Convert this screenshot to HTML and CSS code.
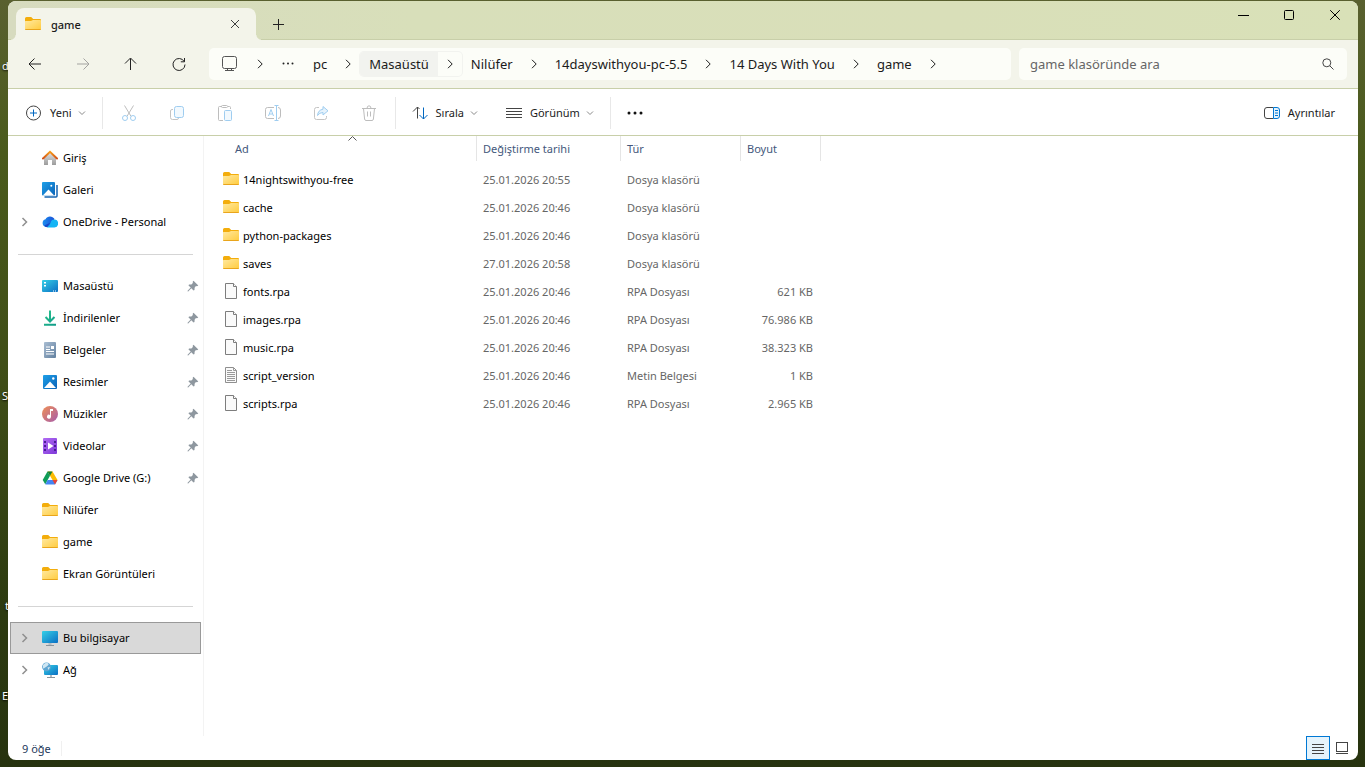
FILE: index.html
```html
<!DOCTYPE html>
<html lang="tr">
<head>
<meta charset="UTF-8">
<meta name="viewport" content="width=device-width, initial-scale=1">
<title>game - Dosya Gezgini</title>
<link rel="stylesheet" href="styles.css">
</head>
<body>

<!-- shared icons -->
<svg class="sprite" aria-hidden="true">
  <defs>
    <linearGradient id="g-folder" x1="0" y1="0" x2="1" y2="1">
      <stop offset="0" stop-color="#ffe9a0"/><stop offset="1" stop-color="#ffcb3d"/>
    </linearGradient>
    <linearGradient id="g-blue" x1="0" y1="0" x2="1" y2="1">
      <stop offset="0" stop-color="#1ea0e8"/><stop offset="1" stop-color="#0a62b8"/>
    </linearGradient>
    <linearGradient id="g-cyan" x1="0" y1="0" x2="1" y2="1">
      <stop offset="0" stop-color="#35d0e6"/><stop offset="1" stop-color="#0b6fc4"/>
    </linearGradient>
    <linearGradient id="g-cloud" x1="0" y1="0" x2="1" y2="0">
      <stop offset="0" stop-color="#1b8df0"/><stop offset="1" stop-color="#1b52d6"/>
    </linearGradient>
    <linearGradient id="g-house" x1="0" y1="0" x2="0" y2="1">
      <stop offset="0" stop-color="#dcdcdc"/><stop offset="1" stop-color="#9c9c9c"/>
    </linearGradient>
    <linearGradient id="g-roof" x1="0" y1="0" x2="0" y2="1">
      <stop offset="0" stop-color="#f59a16"/><stop offset="1" stop-color="#d3521a"/>
    </linearGradient>
    <linearGradient id="g-doc" x1="0" y1="0" x2="1" y2="1">
      <stop offset="0" stop-color="#a9bdd2"/><stop offset="1" stop-color="#62809f"/>
    </linearGradient>
    <linearGradient id="g-music" x1="0" y1="0" x2="1" y2="1">
      <stop offset="0" stop-color="#f09055"/><stop offset="1" stop-color="#a65cab"/>
    </linearGradient>
    <linearGradient id="g-video" x1="0" y1="0" x2="1" y2="1">
      <stop offset="0" stop-color="#b26cf4"/><stop offset="1" stop-color="#7d38d8"/>
    </linearGradient>
    <linearGradient id="g-down" x1="0" y1="0" x2="1" y2="1">
      <stop offset="0" stop-color="#2cc68e"/><stop offset="1" stop-color="#0f9a88"/>
    </linearGradient>
  </defs>
  <symbol id="i-folder" viewBox="0 0 16 16">
    <path d="M0 2.500Q0 1 1.500 1H6.200L8.200 3H15Q16 3 16 4V8H0Z" fill="#f3ad0c"/>
    <path d="M0 5.500Q0 5 .5 5H6L8 4H15.200Q16 4 16 4.800V13Q16 14 15 14H1Q0 14 0 13Z" fill="url(#g-folder)"/>
    <path d="M.3 13.500H15.700" stroke="#e9a51c"/>
  </symbol>
  <symbol id="i-file" viewBox="0 0 16 16">
    <path d="M2.500 .5H10.500L13.500 3.500V15.500H2.500Z" fill="#fafafa" stroke="#7d7d7d"/>
    <path d="M10.500 .5V3.500H13.500" fill="#fff" stroke="#7d7d7d"/>
  </symbol>
  <symbol id="i-text" viewBox="0 0 16 16">
    <path d="M2.500 .5H10.500L13.500 3.500V15.500H2.500Z" fill="#fafafa" stroke="#8f8f8f"/>
    <path d="M10.500 .5V3.500H13.500M4 3.500H9M4 5.500H12M4 7.500H12M4 9.500H12M4 11.500H12M4 13.500H12" fill="none" stroke="#9a9a9a"/>
  </symbol>
  <symbol id="i-pin" viewBox="0 0 12 12">
    <path d="M6.500 .8 11.300 5.400 10 6.200 8.900 6.100 7.600 7.700 7.500 10 6.500 10.500 4.300 8.300 1.200 11.400.5 11.300.6 10.700 3.700 7.600 1.500 5.400 2 4.500 4.400 4.400 5.900 3.100 5.700 1.700Z" fill="#8e979f"/>
  </symbol>
  <symbol id="i-chev" viewBox="0 0 12 12">
    <path d="M4 1.800 8.200 6 4 10.200" fill="none" stroke="currentColor"/>
  </symbol>
  <symbol id="i-expand" viewBox="0 0 12 12">
    <path d="M3.500 2 7.500 6 3.500 10" fill="none" stroke="#8f8f8f" stroke-width="1.500"/>
  </symbol>
  <symbol id="i-down" viewBox="0 0 8 8">
    <path d="M1 2.500 4 5.500 7 2.500" fill="none" stroke="#8a8a8a"/>
  </symbol>
  <symbol id="i-close" viewBox="0 0 12 12">
    <path d="M1.200 1.200 10.800 10.800M10.800 1.200 1.200 10.800" fill="none" stroke="currentColor"/>
  </symbol>
</svg>

<!-- desktop labels that stick out behind the window -->
<div class="desktop" aria-hidden="true">
  <span class="label label-1">d</span>
  <span class="label label-2">S</span>
  <span class="label label-3">t</span>
  <span class="label label-4">E</span>
</div>

<main class="window">

  <header class="titlebar">
    <div class="tab">
      <svg class="icon"><use href="#i-folder"/></svg>
      <span class="tab-name">game</span>
      <button class="tab-close" aria-label="Sekmeyi kapat"><svg width="10" height="10"><use href="#i-close"/></svg></button>
    </div>
    <button class="tab-new" aria-label="Yeni sekme"><svg width="11" height="11"><path d="M5.500 0V11M0 5.500H11" stroke="#222"/></svg></button>
    <div class="controls">
      <button aria-label="Simge durumuna küçült"><svg width="11" height="11"><path d="M0 5.500H11" stroke="#000"/></svg></button>
      <button aria-label="Ekranı kapla"><svg width="11" height="11"><rect x=".5" y=".5" width="9" height="9" rx="1" fill="none" stroke="#000"/></svg></button>
      <button aria-label="Kapat"><svg width="12" height="12"><use href="#i-close"/></svg></button>
    </div>
  </header>

  <nav class="navbar">
    <div class="nav-buttons">
      <button aria-label="Geri"><svg width="14" height="14" fill="none" stroke="#222"><path d="M13 7H1.500M6.500 1.500 1 7 6.500 12.500"/></svg></button>
      <button aria-label="İleri" disabled><svg width="14" height="14" fill="none" stroke="#a3a3a0"><path d="M1 7H12.500M7.500 1.500 13 7 7.500 12.500"/></svg></button>
      <button aria-label="Yukarı"><svg width="14" height="14" fill="none" stroke="#222"><path d="M6.500 13V1.500M1 6.500 6.500 1 12 6.500"/></svg></button>
      <button aria-label="Yenile"><svg width="14" height="14" fill="none" stroke="#222"><path d="M12.200 4.500A6 6 0 1 0 13 7.500M12.500 1V4.800H8.800"/></svg></button>
    </div>
    <div class="address">
      <button class="crumb-icon" aria-label="Bu bilgisayar"><svg width="15" height="16" fill="none" stroke="#555"><rect x=".5" y=".5" width="14" height="12" rx="2"/><path d="M5.500 12.500V15M9.500 12.500V15M3 14.500H12"/></svg></button>
      <button class="sep-chev" aria-label="Aç"><svg width="12" height="12"><use href="#i-chev"/></svg></button>
      <button class="crumb-more" aria-label="Diğer"><svg width="12" height="4" fill="#222"><circle cx="1.500" cy="1.500" r="1"/><circle cx="6" cy="1.500" r="1"/><circle cx="10.500" cy="1.500" r="1"/></svg></button>
      <a href="#" class="crumb">pc</a>
      <button class="sep-chev" aria-label="Aç"><svg width="12" height="12"><use href="#i-chev"/></svg></button>
      <span class="crumb-hover">
        <a href="#" class="crumb">Masaüstü</a>
        <button class="sep-chev" aria-label="Aç"><svg width="12" height="12"><use href="#i-chev"/></svg></button>
      </span>
      <a href="#" class="crumb">Nilüfer</a>
      <button class="sep-chev" aria-label="Aç"><svg width="12" height="12"><use href="#i-chev"/></svg></button>
      <a href="#" class="crumb">14dayswithyou-pc-5.5</a>
      <button class="sep-chev" aria-label="Aç"><svg width="12" height="12"><use href="#i-chev"/></svg></button>
      <a href="#" class="crumb">14 Days With You</a>
      <button class="sep-chev" aria-label="Aç"><svg width="12" height="12"><use href="#i-chev"/></svg></button>
      <a href="#" class="crumb">game</a>
      <button class="sep-chev" aria-label="Aç"><svg width="12" height="12"><use href="#i-chev"/></svg></button>
    </div>
    <label class="search">
      <input type="text" placeholder="game klasöründe ara" aria-label="game klasöründe ara">
      <svg width="12" height="12" fill="none" stroke="#444"><circle cx="4.800" cy="4.800" r="4"/><path d="M7.800 7.800 11.500 11.500"/></svg>
    </label>
  </nav>

  <div class="toolbar">
    <button class="tool">
      <svg class="icon"><circle cx="7.500" cy="8" r="7" fill="#fff" stroke="#444"/><path d="M7.500 4.500V11.500M4 8H11" stroke="#0067c0"/></svg>
      Yeni <svg class="drop"><use href="#i-down"/></svg>
    </button>
    <span class="divider"></span>
    <button class="tool-icon" aria-label="Kes" disabled><svg class="icon" fill="none" stroke="#bdbdbd"><path d="M3.500 .5 10 11.300M12.500 .5 6 11.300"/><circle cx="4" cy="13" r="2.500" stroke="#9fcdf0"/><circle cx="12" cy="13" r="2.500" stroke="#9fcdf0"/></svg></button>
    <button class="tool-icon" aria-label="Kopyala" disabled><svg class="icon" fill="none" stroke="#c4c4c4"><path d="M4 4.500H3Q1.500 4.500 1.500 6V12.500Q1.500 14.500 3.500 14.500H8Q9.500 14.500 9.500 13"/><rect x="5.500" y="1.500" width="9" height="11" rx="2" fill="#f2f9fe" stroke="#9fcdf0"/></svg></button>
    <button class="tool-icon" aria-label="Yapıştır" disabled><svg class="icon" fill="none" stroke="#bdbdbd"><path d="M5 1.500H2.500Q1.500 1.500 1.500 2.500V14.500Q1.500 15.500 2.500 15.500H6M11 1.500H12.500Q13.500 1.500 13.500 2.500V4"/><rect x="4.500" y=".5" width="6" height="2" rx="1"/><rect x="7.500" y="5.500" width="7" height="10" rx="1" fill="#f2f9fe" stroke="#9fcdf0"/></svg></button>
    <button class="tool-icon" aria-label="Yeniden adlandır" disabled><svg class="icon" fill="none" stroke="#bdbdbd"><path d="M9 2.500H2.500Q.5 2.500 .5 4.500V11.500Q.5 13.500 2.500 13.500H9M13 2.500Q15.500 2.500 15.500 5V11Q15.500 13.500 13 13.500"/><path d="M3.500 11 6 4.500 8.500 11M4.500 9H7.500M11.500 1V15M9.500 .5H13.500M9.500 15.500H13.500" stroke="#9fcdf0"/></svg></button>
    <button class="tool-icon" aria-label="Paylaş" disabled><svg class="icon" fill="none" stroke="#c4c4c4"><path d="M6 2.500H3.500Q1.500 2.500 1.500 4.500V12.500Q1.500 14.500 3.500 14.500H11.500Q13.500 14.500 13.500 12.500V11"/><path d="M10 1.500 15 5.800 10 10V7.500Q6.500 7.500 4.500 10.500 5 5 10 4.200Z" fill="#e6f3fc" stroke="#9fcdf0"/></svg></button>
    <button class="tool-icon" aria-label="Sil" disabled><svg class="icon" fill="none" stroke="#bdbdbd"><path d="M1 3.500H15M2.500 3.500 3.600 14Q3.800 15.500 5 15.500H11Q12.200 15.500 12.400 14L13.500 3.500M6 3.500Q6 .8 8 .8T10 3.500M6.500 6.500V11.500M9.500 6.500V11.500"/></svg></button>
    <span class="divider"></span>
    <button class="tool">
      <svg class="icon" fill="none" stroke="#444"><path d="M5.500 13.500V2M1 6.500 5.500 2 7.500 4"/><path d="M11.500 2.500V14M7.500 10 11.500 14 15.500 10" stroke="#0067c0"/></svg>
      Sırala <svg class="drop"><use href="#i-down"/></svg>
    </button>
    <button class="tool">
      <svg class="icon" stroke="#444"><path d="M0 3.500H16M0 6.500H16M0 9.500H16M0 12.500H16"/></svg>
      Görünüm <svg class="drop"><use href="#i-down"/></svg>
    </button>
    <span class="divider"></span>
    <button class="tool-more" aria-label="Diğer seçenekler"><svg width="16" height="4" fill="#111"><circle cx="2" cy="2" r="1.500"/><circle cx="8" cy="2" r="1.500"/><circle cx="14" cy="2" r="1.500"/></svg></button>
    <button class="tool tool-right">
      <svg class="icon" fill="none" stroke="#444"><path d="M9.500 2.500H3Q.5 2.500 .5 5V11Q.5 13.500 3 13.500H9.500"/><path d="M9.500 2.500H13Q15.500 2.500 15.500 5V11Q15.500 13.500 13 13.500H9.500ZM11 5.500H14M11 8H14M11 10.500H14" fill="#e6f3fc" stroke="#0078d4"/></svg>
      Ayrıntılar
    </button>
  </div>

  <div class="content">
    <aside class="sidebar">
      <a href="#" class="item">
        <svg class="icon"><path d="M2 8 8 3 14 8V14.500Q14 15 13.500 15H10V10H6V15H2.500Q2 15 2 14.500Z" fill="url(#g-house)"/><path d="M1 8.500 8 1.800 15 8.500" fill="none" stroke="url(#g-roof)" stroke-width="2" stroke-linecap="round"/></svg>
        <span>Giriş</span>
      </a>
      <a href="#" class="item">
        <svg class="icon"><path d="M2.500 15H14Q15 15 15 14V3" fill="none" stroke="#1463b0" stroke-width="1.500"/><rect width="13" height="13.500" rx="1" fill="url(#g-blue)"/><path d="M.8 13.500 6.500 7.500 12.200 13.500Z" fill="#fff"/><circle cx="9.300" cy="3.800" r="1" fill="#fff"/></svg>
        <span>Galeri</span>
      </a>
      <a href="#" class="item">
        <svg class="expand"><use href="#i-expand"/></svg>
        <svg class="icon"><path d="M4 13A4 4 0 0 1 3.500 5.200 5.200 5.200 0 0 1 12.500 5L7 13Z" fill="url(#g-cloud)"/><path d="M5 13.200Q8 11.800 8.600 8.500A4 4 0 0 1 13 5.500 4 4 0 0 1 12.500 13.400H5Z" fill="#14b4f4"/><path d="M8.600 8.500 5 13.200Q3 13 2.300 11.500Z" fill="#1749c8"/></svg>
        <span>OneDrive - Personal</span>
      </a>
      <hr>
      <a href="#" class="item">
        <svg class="icon"><rect y="2" width="16" height="12" rx="1" fill="url(#g-cyan)"/><path d="M2 4H4V5.500H2ZM2 7H4V8.500H2Z" fill="#fff"/><path d="M11 13H12M13 13H14" stroke="#fff"/></svg>
        <span>Masaüstü</span><svg class="pin"><use href="#i-pin"/></svg>
      </a>
      <a href="#" class="item">
        <svg class="icon" fill="none" stroke="url(#g-down)" stroke-width="2"><path d="M8 .5 8.010 11M3.500 7 8 11.500 12.500 7M2 14.800 14 14.810"/></svg>
        <span>İndirilenler</span><svg class="pin"><use href="#i-pin"/></svg>
      </a>
      <a href="#" class="item">
        <svg class="icon"><rect x="2" width="12" height="16" rx="1" fill="url(#g-doc)"/><path d="M4 5H8M4 7.500H8M4 9.500H12M4 12H12" stroke="#fff"/><rect x="9" y="4" width="3" height="3" fill="#fff"/></svg>
        <span>Belgeler</span><svg class="pin"><use href="#i-pin"/></svg>
      </a>
      <a href="#" class="item">
        <svg class="icon"><rect x="1" y="1" width="14" height="14" rx="1" fill="url(#g-blue)"/><path d="M2 14 8 7.500 14 14Z" fill="#fff"/><circle cx="11.300" cy="4.500" r="1.200" fill="#fff"/></svg>
        <span>Resimler</span><svg class="pin"><use href="#i-pin"/></svg>
      </a>
      <a href="#" class="item">
        <svg class="icon"><circle cx="8" cy="8" r="8" fill="url(#g-music)"/><path d="M8 3H11V5H9V10.800A2 2 0 1 1 8 9Z" fill="#fff"/></svg>
        <span>Müzikler</span><svg class="pin"><use href="#i-pin"/></svg>
      </a>
      <a href="#" class="item">
        <svg class="icon"><rect x="1" width="14" height="16" rx="1" fill="url(#g-video)"/><path d="M3 3V15M13 3V15" stroke="#4b1e96" stroke-width="2" stroke-dasharray="2 2"/><path d="M6 4.500 11.500 8 6 11.500Z" fill="#fff"/></svg>
        <span>Videolar</span><svg class="pin"><use href="#i-pin"/></svg>
      </a>
      <a href="#" class="item">
        <svg class="icon"><path d="M5.500 1.500H10.500L15.500 10H10.500Z" fill="#fbbc04"/><path d="M5.500 1.500 8 5.700 3.300 14.300.7 10Z" fill="#0f9d58"/><path d="M5.500 1.500H10.500L8 5.700Z" fill="#188038"/><path d="M5.600 10H15.500L13 14.500H3.300Z" fill="#4285f4"/><path d="M10.500 10H15.500L13 14.500Z" fill="#ea4335"/></svg>
        <span>Google Drive (G:)</span><svg class="pin"><use href="#i-pin"/></svg>
      </a>
      <a href="#" class="item">
        <svg class="icon"><use href="#i-folder"/></svg>
        <span>Nilüfer</span>
      </a>
      <a href="#" class="item">
        <svg class="icon"><use href="#i-folder"/></svg>
        <span>game</span>
      </a>
      <a href="#" class="item">
        <svg class="icon"><use href="#i-folder"/></svg>
        <span>Ekran Görüntüleri</span>
      </a>
      <hr>
      <a href="#" class="item selected">
        <svg class="expand"><use href="#i-expand"/></svg>
        <svg class="icon"><rect y="1" width="16" height="12" rx="1" fill="url(#g-cyan)"/><path d="M6.500 13H9.500V15H6.500Z" fill="#b5bcc2"/><path d="M4 15.500H12" stroke="#8a949c"/></svg>
        <span>Bu bilgisayar</span>
      </a>
      <a href="#" class="item">
        <svg class="expand"><use href="#i-expand"/></svg>
        <svg class="icon"><rect x="2" y="3" width="14" height="10" rx="1" fill="url(#g-cyan)"/><path d="M8 13H10V15H8Z" fill="#b5bcc2"/><path d="M5 15.500H13" stroke="#8a949c"/><circle cx="4.500" cy="4.800" r="4.400" fill="#5da5d2"/><path d="M1 3Q4 0 6 1.200T4 5 1 6ZM5.500 5.500 8 5 6.500 8Z" fill="#cfe6f2"/></svg>
        <span>Ağ</span>
      </a>
    </aside>

    <section class="files">
      <table>
        <thead>
          <tr>
            <th class="col-name"><div class="sorted">Ad<svg class="caret" width="9" height="5"><path d="M.5 4.500 4.500 .5 8.500 4.500" fill="none" stroke="#555"/></svg></div></th>
            <th class="col-date">Değiştirme tarihi</th>
            <th class="col-type">Tür</th>
            <th class="col-size">Boyut</th>
          </tr>
        </thead>
        <tbody>
          <tr><td><svg class="icon"><use href="#i-folder"/></svg>14nightswithyou-free</td><td>25.01.2026 20:55</td><td>Dosya klasörü</td><td></td></tr>
          <tr><td><svg class="icon"><use href="#i-folder"/></svg>cache</td><td>25.01.2026 20:46</td><td>Dosya klasörü</td><td></td></tr>
          <tr><td><svg class="icon"><use href="#i-folder"/></svg>python-packages</td><td>25.01.2026 20:46</td><td>Dosya klasörü</td><td></td></tr>
          <tr><td><svg class="icon"><use href="#i-folder"/></svg>saves</td><td>27.01.2026 20:58</td><td>Dosya klasörü</td><td></td></tr>
          <tr><td><svg class="icon"><use href="#i-file"/></svg>fonts.rpa</td><td>25.01.2026 20:46</td><td>RPA Dosyası</td><td>621 KB</td></tr>
          <tr><td><svg class="icon"><use href="#i-file"/></svg>images.rpa</td><td>25.01.2026 20:46</td><td>RPA Dosyası</td><td>76.986 KB</td></tr>
          <tr><td><svg class="icon"><use href="#i-file"/></svg>music.rpa</td><td>25.01.2026 20:46</td><td>RPA Dosyası</td><td>38.323 KB</td></tr>
          <tr><td><svg class="icon"><use href="#i-text"/></svg>script_version</td><td>25.01.2026 20:46</td><td>Metin Belgesi</td><td>1 KB</td></tr>
          <tr><td><svg class="icon"><use href="#i-file"/></svg>scripts.rpa</td><td>25.01.2026 20:46</td><td>RPA Dosyası</td><td>2.965 KB</td></tr>
        </tbody>
      </table>
    </section>
  </div>

  <footer class="statusbar">
    <span class="count">9 öğe</span>
    <button class="view active" aria-label="Ayrıntılar görünümü"><svg width="12" height="12" stroke="#444"><path d="M0 2.500H12M0 5.500H12M0 8.500H12M0 11.500H12"/></svg></button>
    <button class="view" aria-label="Büyük simgeler"><svg width="12" height="12" fill="none" stroke="#444"><rect x=".5" y=".5" width="11" height="9"/><path d="M0 11.500H12"/></svg></button>
  </footer>

</main>
</body>
</html>
```
FILE: styles.css
```css
:root {
  --bar-bg: #f3f4ea;
  --field-bg: #fcfdf8;
  --line: #c8cfa9;
  --text: #1b1b1b;
  --muted: #666;
  --header: #44587c;
}
* {
  box-sizing: border-box;
}
body {
  margin: 0;
  height: 100vh;
  padding: 1px 7px 7px 8px;
  display: flex;
  background: linear-gradient(#59602f, #4a5a1c 20%, #3f4d17 50%, #2c3a10 80%, #27330f);
  font-family: "Segoe UI", "Noto Sans", "Open Sans", sans-serif;
  font-size: 11px;
  color: #000;
  overflow: hidden;
}
button {
  display: flex;
  align-items: center;
  justify-content: center;
  padding: 0;
  border: none;
  background: none;
  font: inherit;
  color: var(--text);
}
a {
  color: inherit;
  text-decoration: none;
}
svg {
  flex: none;
  display: block;
}
.sprite {
  position: absolute;
  width: 0;
  height: 0;
}
.icon {
  width: 16px;
  height: 16px;
}

/* desktop */
.label {
  position: absolute;
  left: 2px;
  color: #fff;
  text-shadow: 0 1px 2px #000;
}
.label-1 { top: 58px; }
.label-2 { top: 388px; }
.label-3 { top: 598px; left: 5px; }
.label-4 { top: 688px; }

.window {
  position: relative;
  flex: 1;
  min-width: 0;
  display: flex;
  flex-direction: column;
  background: #fff;
  border-radius: 8px;
  overflow: hidden;
}

/* title bar */
.titlebar {
  display: flex;
  height: 39px;
  padding-left: 8px;
  background: linear-gradient(90deg, #d7dbbf, #d8dfba 30%, #d9dfb9 70%, #d9e1b8);
  box-shadow: inset 0 -1px var(--line);
}
.tab {
  position: relative;
  display: flex;
  align-items: center;
  width: 240px;
  margin-top: 7px;
  padding: 0 13px 0 9px;
  background: var(--bar-bg);
  border-radius: 8px 8px 0 0;
}
.tab::before,
.tab::after {
  content: "";
  position: absolute;
  bottom: 0;
  width: 5px;
  height: 5px;
}
.tab::before {
  right: 100%;
  background: radial-gradient(circle at 0 0, transparent 4px, var(--bar-bg) 5px);
}
.tab::after {
  left: 100%;
  background: radial-gradient(circle at 100% 0, transparent 4px, var(--bar-bg) 5px);
}
.tab-name {
  flex: 1;
  margin-left: 10px;
  font-weight: 500;
  color: var(--text);
}
.tab-close {
  width: 16px;
  height: 24px;
}
.tab-new {
  width: 32px;
  margin: 8px 0 0 6px;
}
.controls {
  display: flex;
  height: 28px;
  margin-left: auto;
}
.controls button {
  width: 46px;
  color: #000;
}

/* navigation */
.navbar {
  display: flex;
  align-items: center;
  gap: 6px;
  height: 49px;
  padding: 0 11px 0 3px;
  background: var(--bar-bg);
  border-bottom: 1px solid var(--line);
}
.nav-buttons {
  display: flex;
}
.nav-buttons button {
  width: 48px;
  height: 32px;
}
.address {
  flex: 1;
  min-width: 0;
  display: flex;
  align-items: center;
  height: 32px;
  padding-left: 2px;
  border-radius: 5px;
  background: var(--field-bg);
  font-size: 13px;
  color: var(--text);
  overflow: hidden;
}
.crumb-icon {
  width: 37px;
  height: 24px;
}
.crumb-more {
  width: 32px;
  height: 24px;
}
.crumb {
  padding: 0 9px;
  line-height: 24px;
  white-space: nowrap;
}
.sep-chev {
  width: 24px;
  height: 24px;
}
.crumb-hover {
  display: flex;
  border-radius: 4px;
  box-shadow: 0 0 0 1px #f2f3ef;
}
.crumb-hover .crumb {
  background: #f2f3ef;
  border-radius: 4px 0 0 4px;
}
.search {
  display: flex;
  align-items: center;
  width: 328px;
  height: 32px;
  margin-left: 2px;
  padding: 0 13px 0 11px;
  border-radius: 5px;
  background: var(--field-bg);
}
.search input {
  flex: 1;
  min-width: 0;
  padding: 0;
  border: none;
  outline: none;
  background: none;
  font: inherit;
  font-size: 13px;
}
.search input::placeholder {
  color: #666;
}

/* toolbar */
.toolbar {
  display: flex;
  align-items: center;
  height: 47px;
  padding: 1px 9px 0 4px;
  border-bottom: 1px solid var(--line);
}
.tool {
  height: 32px;
  gap: 8px;
  margin: 0 6px;
  padding: 0 8px;
}
.drop {
  width: 8px;
  height: 8px;
  margin-left: -2px;
}
.tool-icon {
  width: 48px;
  height: 32px;
}
.tool-more {
  width: 44px;
  height: 32px;
}
.tool-right {
  margin-left: auto;
}
.divider {
  width: 1px;
  height: 32px;
  margin: 0 2px;
  background: #e8e8e8;
}

/* sidebar */
.content {
  flex: 1;
  min-height: 0;
  display: flex;
}
.sidebar {
  width: 196px;
  padding-top: 6px;
  border-right: 1px solid #f3f3f3;
}
.item {
  display: flex;
  align-items: center;
  height: 32px;
  margin: 0 2px;
  padding-left: 32px;
}
.item span {
  flex: 1;
  margin-left: 5px;
  padding-bottom: 1px;
  white-space: nowrap;
}
.expand {
  width: 12px;
  height: 12px;
  margin: 0 11px 0 -23px;
}
.pin {
  width: 12px;
  height: 12px;
  margin-right: 2px;
}
.selected {
  padding-left: 31px;
  border: 1px solid #999;
  background: #d9d9d9;
}
hr {
  height: 1px;
  margin: 16px 10px 15px;
  border: none;
  background: #d5d5d5;
}

/* file list */
.files {
  flex: 1;
  min-width: 0;
}
table {
  border-collapse: separate;
  border-spacing: 0;
  table-layout: fixed;
  width: 617px;
}
th {
  height: 25px;
  padding: 0 0 0 6px;
  border-right: 1px solid #e5e5e5;
  font-weight: normal;
  text-align: left;
  color: var(--header);
}
.col-name {
  width: 273px;
  padding-left: 24px;
}
.col-date { width: 144px; }
.col-type { width: 120px; }
.col-size { width: 80px; }
.sorted {
  position: relative;
  padding-left: 7px;
  line-height: 25px;
}
.caret {
  position: absolute;
  top: 0;
  left: 50%;
  margin-left: -4px;
}
tbody::before {
  content: "";
  display: block;
  height: 5px;
}
td {
  height: 28px;
  padding: 0 8px 0 6px;
  line-height: 18px;
  color: var(--muted);
  white-space: nowrap;
}
td:first-child {
  padding-left: 19px;
  color: #000;
}
td:last-child {
  text-align: right;
}
td .icon {
  display: inline-block;
  margin-right: 4px;
  vertical-align: -3px;
}

/* status bar */
.statusbar {
  display: flex;
  align-items: center;
  height: 24px;
  padding: 0 4px 0 14px;
  color: #1e395b;
}
.count {
  width: 40px;
  margin-right: auto;
  border-right: 1px solid #f0f0f0;
}
.view {
  width: 24px;
  height: 24px;
}
.view.active {
  border: 1px solid #0078d4;
  background: #e5f3fb;
}
```
